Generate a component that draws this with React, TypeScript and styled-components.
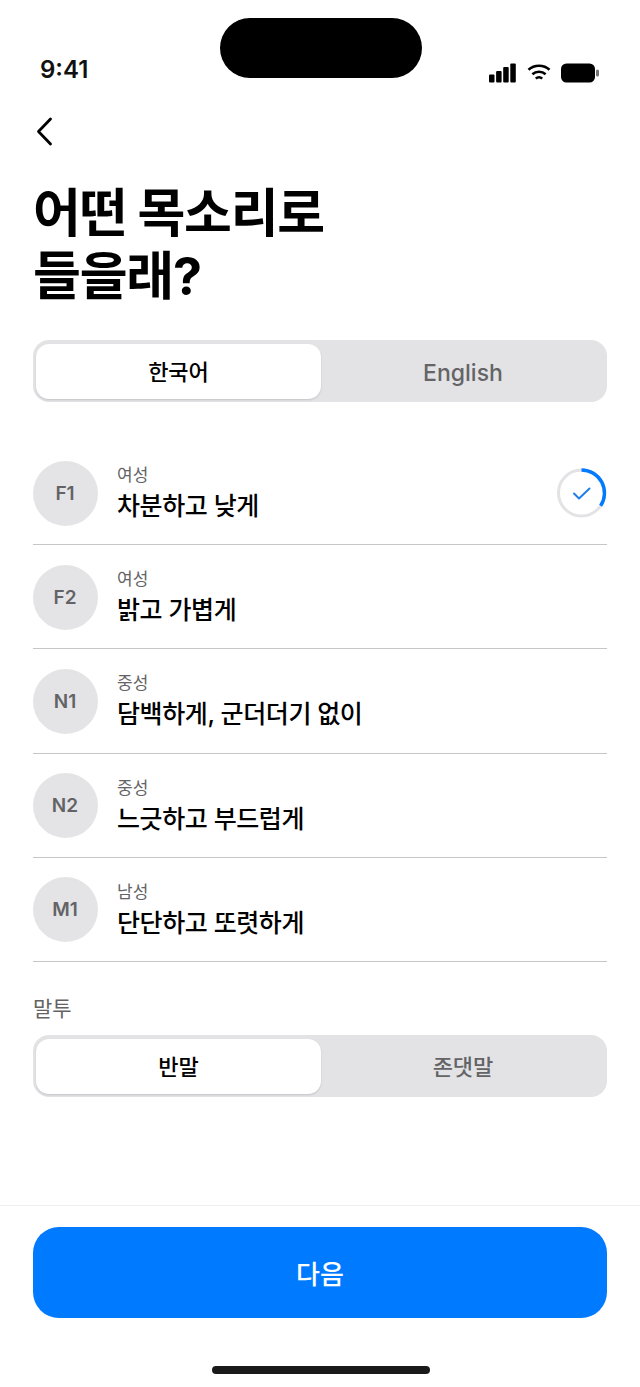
import React, { useState } from "react";
import styled, { createGlobalStyle } from "styled-components";

const FONT = `Inter, "Noto Sans CJK KR", sans-serif`;

const GlobalStyle = createGlobalStyle`
    html, body {
        margin: 0;
        padding: 0;
        background: #ffffff;
    }
    * {
        box-sizing: border-box;
    }
`;

const Page = styled.div`
    width: 640px;
    height: 1387px;
    display: flex;
    flex-direction: column;
    background: #ffffff;
    font-family: ${FONT};
    color: #000000;
    overflow: hidden;
`;

const StatusBar = styled.div`
    position: relative;
    height: 98px;
    flex: none;
    display: flex;
    align-items: flex-end;
    justify-content: space-between;
    padding: 0 41px 13px 40px;
`;

const Island = styled.div`
    position: absolute;
    left: 220px;
    top: 18px;
    width: 202px;
    height: 60px;
    border-radius: 30px;
    background: #000000;
`;

const Time = styled.div`
    font-size: 24px;
    line-height: 30px;
    font-weight: 600;
    color: #111111;
`;

const StatusIcons = styled.div`
    display: flex;
    align-items: center;
    gap: 10px;
    height: 20px;
    margin-bottom: 2px;
`;

const Main = styled.div`
    flex: 1;
    display: flex;
    flex-direction: column;
    padding: 0 33px;
`;

const BackButton = styled.button`
    width: 24px;
    height: 32px;
    margin: 18px 0 0 0;
    padding: 0;
    border: none;
    background: none;
    display: block;
`;

const Title = styled.h1`
    margin: 34px 0 0 0;
    font-size: 52px;
    line-height: 63px;
    font-weight: 700;
    letter-spacing: -1.2px;
`;

const Segment = styled.div`
    height: 62px;
    flex: none;
    display: grid;
    grid-template-columns: 288px 1fr;
    padding: 4px 0 3px 3px;
    border-radius: 16px;
    background: #e3e3e6;
`;

const SegmentItem = styled.div<{ $active?: boolean; $latin?: boolean }>`
    display: flex;
    align-items: center;
    justify-content: center;
    padding: ${(p) => (p.$latin ? "2px 0 0" : "0 0 3px")};
    font-size: ${(p) => (p.$latin ? "23px" : "22px")};
    font-weight: 500;
    color: ${(p) => (p.$active ? "#000000" : "#646467")};
    background: ${(p) => (p.$active ? "#ffffff" : "transparent")};
    border-radius: 13px;
    box-shadow: ${(p) => (p.$active ? "0 1px 2px rgba(0, 0, 0, 0.14)" : "none")};
    margin-right: ${(p) => (p.$active ? "3px" : "5px")};
`;

const VoiceSegment = styled(Segment)`
    margin-top: 32px;
`;

const VoiceList = styled.div`
    margin-top: 39px;
    display: flex;
    flex-direction: column;
`;

const Row = styled.div`
    height: 104.2px;
    display: flex;
    align-items: center;
    gap: 19px;
    padding-top: 1px;
    border-bottom: 1.5px solid #c6c6c8;
`;

const Avatar = styled.div`
    width: 65px;
    height: 65px;
    flex: none;
    border-radius: 50%;
    background: #e4e4e7;
    display: flex;
    align-items: center;
    justify-content: center;
    padding-right: 1px;
    font-size: 19px;
    font-weight: 600;
    color: #636366;
`;

const RowText = styled.div`
    flex: 1;
    display: flex;
    flex-direction: column;
`;

const VoiceLabel = styled.div`
    font-size: 17px;
    line-height: 24px;
    color: #636366;
`;

const VoiceName = styled.div`
    font-size: 25px;
    line-height: 34px;
    font-weight: 500;
    margin-top: 2px;
    letter-spacing: -0.4px;
`;

const ToneLabel = styled.div`
    margin-top: 33px;
    font-size: 21px;
    line-height: 28px;
    color: #636366;
`;

const ToneSegment = styled(Segment)`
    margin-top: 12px;
`;

const Footer = styled.div`
    flex: none;
    height: 182px;
    border-top: 1px solid #efeff1;
    padding: 21px 33px 0;
    position: relative;
`;

const NextButton = styled.button`
    display: flex;
    align-items: center;
    justify-content: center;
    width: 100%;
    height: 91px;
    border: none;
    border-radius: 26px;
    background: #007aff;
    color: #ffffff;
    font-family: ${FONT};
    font-size: 26px;
    font-weight: 500;
`;

const HomeIndicator = styled.div`
    position: absolute;
    left: 212px;
    bottom: 13px;
    width: 218px;
    height: 8px;
    border-radius: 4px;
    background: #1a1a1a;
`;

const SignalIcon = () => (
    <svg width="28" height="20" viewBox="0 0 28 20" fill="#000">
        <rect x="0" y="11.5" width="5.5" height="8" rx="1" />
        <rect x="7.1" y="8" width="5.5" height="11.5" rx="1" />
        <rect x="14.2" y="4" width="5.5" height="15.5" rx="1" />
        <rect x="21.3" y="0.5" width="5.5" height="19" rx="1" />
    </svg>
);

const WifiIcon = () => (
    <svg width="24" height="18" viewBox="0 0 24 18" fill="none" stroke="#000" strokeWidth="2.6">
        <path d="M1.5 5.8C7.3 .4 16.7 .4 22.5 5.8" />
        <path d="M5.4 10.2C9 6.9 15 6.9 18.6 10.2" />
        <path d="M8.8 14.6C10.6 13 13.4 13 15.2 14.6" />
    </svg>
);

const BatteryIcon = () => (
    <svg width="38" height="20" viewBox="0 0 38 20" fill="#000">
        <rect x="0" y="0.5" width="34" height="19" rx="5.5" />
        <rect x="35" y="6.5" width="3" height="7" rx="1.5" fillOpacity="0.55" />
    </svg>
);

const BackIcon = () => (
    <svg width="24" height="32" viewBox="0 0 24 32" fill="none" stroke="#000" strokeWidth="2.8" strokeLinecap="round" strokeLinejoin="round">
        <path d="M17.5 3 5.5 15.5 17.5 28" />
    </svg>
);

// 진행 링 + 체크
const ProgressCheck = () => (
    <svg width="52" height="52" viewBox="0 0 52 52" fill="none">
        <circle cx="26.5" cy="26" r="23" stroke="#e3e3e6" strokeWidth="3" />
        <path d="M26.5 3A23 23 0 0 1 45.6 38.8" stroke="#007aff" strokeWidth="3.4" />
        <path d="M19 26.5 24 31.5 34.5 21.5" stroke="#1f7fe8" strokeWidth="2" strokeLinecap="round" strokeLinejoin="round" />
    </svg>
);

const voices = [
    { code: "F1", label: "여성", name: "차분하고 낮게", selected: true },
    { code: "F2", label: "여성", name: "밝고 가볍게" },
    { code: "N1", label: "중성", name: "담백하게, 군더더기 없이" },
    { code: "N2", label: "중성", name: "느긋하고 부드럽게" },
    { code: "M1", label: "남성", name: "단단하고 또렷하게" },
];

const App: React.FC = () => {
    const [lang] = useState("ko");
    const [tone] = useState("casual");

    return (
        <Page>
            <GlobalStyle />
            <StatusBar>
                <Time>9:41</Time>
                <Island />
                <StatusIcons>
                    <SignalIcon />
                    <WifiIcon />
                    <BatteryIcon />
                </StatusIcons>
            </StatusBar>
            <Main>
                <BackButton aria-label="back">
                    <BackIcon />
                </BackButton>
                <Title>
                    어떤 목소리로
                    <br />
                    들을래?
                </Title>
                <VoiceSegment>
                    <SegmentItem $active={lang === "ko"}>한국어</SegmentItem>
                    <SegmentItem $latin $active={lang === "en"}>English</SegmentItem>
                </VoiceSegment>
                <VoiceList>
                    {voices.map((voice) => (
                        <Row key={voice.code}>
                            <Avatar>{voice.code}</Avatar>
                            <RowText>
                                <VoiceLabel>{voice.label}</VoiceLabel>
                                <VoiceName>{voice.name}</VoiceName>
                            </RowText>
                            {voice.selected ? <ProgressCheck /> : null}
                        </Row>
                    ))}
                </VoiceList>
                <ToneLabel>말투</ToneLabel>
                <ToneSegment>
                    <SegmentItem $active={tone === "casual"}>반말</SegmentItem>
                    <SegmentItem $active={tone === "polite"}>존댓말</SegmentItem>
                </ToneSegment>
            </Main>
            <Footer>
                <NextButton>다음</NextButton>
                <HomeIndicator />
            </Footer>
        </Page>
    );
};

export default App;
